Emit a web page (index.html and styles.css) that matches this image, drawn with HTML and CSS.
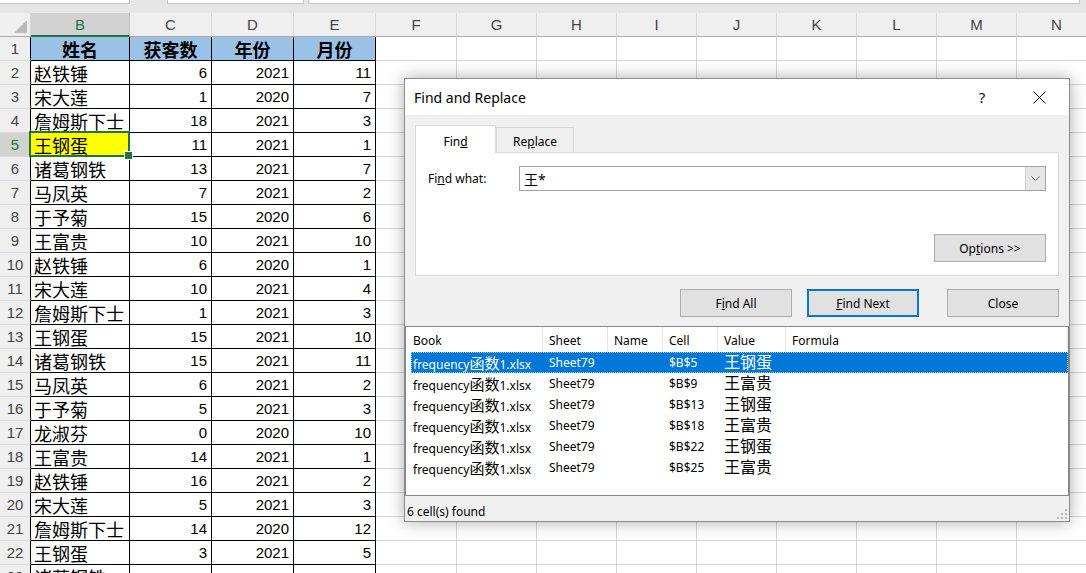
FILE: index.html
```html
<!DOCTYPE html>
<html lang="zh">
<head>
<meta charset="utf-8">
<title>Find and Replace</title>
<link rel="stylesheet" href="styles.css">
</head>
<body>
<div class="app">
  <div class="topstrip"><span class="box b1"></span><span class="box b2"></span><span class="box b3"></span></div>
  <div class="sheet">
    <div class="corner"></div><div class="ch sel">B</div><div class="ch">C</div><div class="ch">D</div><div class="ch">E</div><div class="ch">F</div><div class="ch">G</div><div class="ch">H</div><div class="ch">I</div><div class="ch">J</div><div class="ch">K</div><div class="ch">L</div><div class="ch">M</div><div class="ch">N</div>

    <div class="rh d">1</div><div class="h">姓名</div><div class="h">获客数</div><div class="h">年份</div><div class="h">月份</div><div></div><div></div><div></div><div></div><div></div><div></div><div></div><div></div><div></div>
    <div class="rh d">2</div><div class="t">赵铁锤</div><div class="n">6</div><div class="n">2021</div><div class="n">11</div><div></div><div></div><div></div><div></div><div></div><div></div><div></div><div></div><div></div>
    <div class="rh d">3</div><div class="t">宋大莲</div><div class="n">1</div><div class="n">2020</div><div class="n">7</div><div></div><div></div><div></div><div></div><div></div><div></div><div></div><div></div><div></div>
    <div class="rh d">4</div><div class="t">詹姆斯下士</div><div class="n">18</div><div class="n">2021</div><div class="n">3</div><div></div><div></div><div></div><div></div><div></div><div></div><div></div><div></div><div></div>
    <div class="rh d on">5</div><div class="t cur">王钢蛋</div><div class="n">11</div><div class="n">2021</div><div class="n">1</div><div></div><div></div><div></div><div></div><div></div><div></div><div></div><div></div><div></div>
    <div class="rh d">6</div><div class="t">诸葛钢铁</div><div class="n">13</div><div class="n">2021</div><div class="n">7</div><div></div><div></div><div></div><div></div><div></div><div></div><div></div><div></div><div></div>
    <div class="rh d">7</div><div class="t">马凤英</div><div class="n">7</div><div class="n">2021</div><div class="n">2</div><div></div><div></div><div></div><div></div><div></div><div></div><div></div><div></div><div></div>
    <div class="rh d">8</div><div class="t">于予菊</div><div class="n">15</div><div class="n">2020</div><div class="n">6</div><div></div><div></div><div></div><div></div><div></div><div></div><div></div><div></div><div></div>
    <div class="rh d">9</div><div class="t">王富贵</div><div class="n">10</div><div class="n">2021</div><div class="n">10</div><div></div><div></div><div></div><div></div><div></div><div></div><div></div><div></div><div></div>
    <div class="rh d">10</div><div class="t">赵铁锤</div><div class="n">6</div><div class="n">2020</div><div class="n">1</div><div></div><div></div><div></div><div></div><div></div><div></div><div></div><div></div><div></div>
    <div class="rh d">11</div><div class="t">宋大莲</div><div class="n">10</div><div class="n">2021</div><div class="n">4</div><div></div><div></div><div></div><div></div><div></div><div></div><div></div><div></div><div></div>
    <div class="rh d">12</div><div class="t">詹姆斯下士</div><div class="n">1</div><div class="n">2021</div><div class="n">3</div><div></div><div></div><div></div><div></div><div></div><div></div><div></div><div></div><div></div>
    <div class="rh d">13</div><div class="t">王钢蛋</div><div class="n">15</div><div class="n">2021</div><div class="n">10</div><div></div><div></div><div></div><div></div><div></div><div></div><div></div><div></div><div></div>
    <div class="rh d">14</div><div class="t">诸葛钢铁</div><div class="n">15</div><div class="n">2021</div><div class="n">11</div><div></div><div></div><div></div><div></div><div></div><div></div><div></div><div></div><div></div>
    <div class="rh d">15</div><div class="t">马凤英</div><div class="n">6</div><div class="n">2021</div><div class="n">2</div><div></div><div></div><div></div><div></div><div></div><div></div><div></div><div></div><div></div>
    <div class="rh d">16</div><div class="t">于予菊</div><div class="n">5</div><div class="n">2021</div><div class="n">3</div><div></div><div></div><div></div><div></div><div></div><div></div><div></div><div></div><div></div>
    <div class="rh d">17</div><div class="t">龙淑芬</div><div class="n">0</div><div class="n">2020</div><div class="n">10</div><div></div><div></div><div></div><div></div><div></div><div></div><div></div><div></div><div></div>
    <div class="rh d">18</div><div class="t">王富贵</div><div class="n">14</div><div class="n">2021</div><div class="n">1</div><div></div><div></div><div></div><div></div><div></div><div></div><div></div><div></div><div></div>
    <div class="rh d">19</div><div class="t">赵铁锤</div><div class="n">16</div><div class="n">2021</div><div class="n">2</div><div></div><div></div><div></div><div></div><div></div><div></div><div></div><div></div><div></div>
    <div class="rh d">20</div><div class="t">宋大莲</div><div class="n">5</div><div class="n">2021</div><div class="n">3</div><div></div><div></div><div></div><div></div><div></div><div></div><div></div><div></div><div></div>
    <div class="rh d">21</div><div class="t">詹姆斯下士</div><div class="n">14</div><div class="n">2020</div><div class="n">12</div><div></div><div></div><div></div><div></div><div></div><div></div><div></div><div></div><div></div>
    <div class="rh d">22</div><div class="t">王钢蛋</div><div class="n">3</div><div class="n">2021</div><div class="n">5</div><div></div><div></div><div></div><div></div><div></div><div></div><div></div><div></div><div></div>
    <div class="rh d">23</div><div class="t">诸葛钢铁</div><div class="n"></div><div class="n"></div><div class="n"></div><div></div><div></div><div></div><div></div><div></div><div></div><div></div><div></div><div></div>
  </div>
</div>

<div class="dialog">
  <div class="titlebar">
    <span class="title">Find and Replace</span>
    <span class="help">?</span>
    <span class="close"><svg width="13" height="13" viewBox="0 0 13 13"><path d="M0.5 0.5L12.5 12.5M12.5 0.5L0.5 12.5" stroke="#000" stroke-width="1" fill="none"/></svg></span>
  </div>
  <div class="dbody">
    <div class="tabs">
      <div class="tab active">Fin<u>d</u></div>
      <div class="tab">Re<u>p</u>lace</div>
    </div>
    <div class="panel">
      <div class="findrow">
        <span class="lbl">Fi<u>n</u>d what:</span>
        <div class="combo"><span class="val">王*</span><span class="drop"><svg width="9" height="5" viewBox="0 0 9 5"><path d="M0.5 0.5L4.5 4.5L8.5 0.5" fill="none" stroke="#606060"/></svg></span></div>
      </div>
      <div class="optrow"><button class="btn">Op<u>t</u>ions &gt;&gt;</button></div>
    </div>
    <div class="btnrow">
      <button class="btn findall">F<u>i</u>nd All</button>
      <button class="btn primary findnext"><u>F</u>ind Next</button>
      <button class="btn">Close</button>
    </div>
  </div>
  <div class="results">
    <div class="rhead"><span class="c1">Book</span><span>Sheet</span><span>Name</span><span>Cell</span><span>Value</span><span>Formula</span></div>
    <div class="rrow selected"><span class="c1">frequency<span class="cj">函数</span>1.xlsx</span><span>Sheet79</span><span></span><span>$B$5</span><span class="v">王钢蛋</span><span></span></div>
    <div class="rrow"><span class="c1">frequency<span class="cj">函数</span>1.xlsx</span><span>Sheet79</span><span></span><span>$B$9</span><span class="v">王富贵</span><span></span></div>
    <div class="rrow"><span class="c1">frequency<span class="cj">函数</span>1.xlsx</span><span>Sheet79</span><span></span><span>$B$13</span><span class="v">王钢蛋</span><span></span></div>
    <div class="rrow"><span class="c1">frequency<span class="cj">函数</span>1.xlsx</span><span>Sheet79</span><span></span><span>$B$18</span><span class="v">王富贵</span><span></span></div>
    <div class="rrow"><span class="c1">frequency<span class="cj">函数</span>1.xlsx</span><span>Sheet79</span><span></span><span>$B$22</span><span class="v">王钢蛋</span><span></span></div>
    <div class="rrow"><span class="c1">frequency<span class="cj">函数</span>1.xlsx</span><span>Sheet79</span><span></span><span>$B$25</span><span class="v">王富贵</span><span></span></div>
  </div>
  <div class="status">
    <span class="found">6 cell(s) found</span>
    <svg class="grip" width="12" height="12" viewBox="0 0 12 12"><g fill="#b8b8b8"><rect x="9" y="1" width="2" height="2"/><rect x="5" y="5" width="2" height="2"/><rect x="9" y="5" width="2" height="2"/><rect x="1" y="9" width="2" height="2"/><rect x="5" y="9" width="2" height="2"/><rect x="9" y="9" width="2" height="2"/></g></svg>
  </div>
</div>
</body>
</html>
```

FILE: styles.css
```css
* { box-sizing: border-box; }
html, body { margin: 0; padding: 0; }
body {
  width: 1086px;
  height: 573px;
  overflow: hidden;
  background: #fff;
  position: relative;
  font-family: "Liberation Sans", "Noto Sans CJK SC", sans-serif;
}

/* top strip (formula bar bottom) */
.topstrip { height: 13px; background: #e6e6e6; display: flex; align-items: flex-start; }
.box { height: 4px; background: #fff; border: 1px solid #c6c6c6; border-top: none; }
.b1 { width: 131px; margin-left: -1px; }
.b2 { width: 137px; margin-left: 37px; }
.b3 { flex: 1; margin-left: 4px; margin-right: 6px; }

/* sheet grid */
.sheet {
  display: grid;
  grid-template-columns: 31px 99px 82px 82px 82px 81px repeat(8, 80px);
  grid-auto-rows: 24px;
}
.sheet > div {
  border-right: 1px solid #d4d4d4;
  border-bottom: 1px solid #d4d4d4;
  white-space: nowrap;
  overflow: hidden;
  display: flex;
  align-items: center;
  color: #000;
}
.sheet > .corner { background: #efefef; position: relative; border-bottom-color: #ababab; border-right-color: #d4d4d4; }
.sheet > .corner::after {
  content: "";
  position: absolute;
  right: 3px;
  bottom: 3px;
  width: 0;
  height: 0;
  border-left: 13px solid transparent;
  border-bottom: 13px solid #b9b9b9;
}
.sheet > .ch {
  background: #efefef;
  justify-content: center;
  color: #444;
  font-size: 15px;
  border-bottom-color: #ababab;
  border-right-color: #dadada;
}
.sheet > .ch.sel {
  background: #d2d2d2;
  color: #217346;
  border-bottom: 2px solid #217346;
  border-right-color: #c2c2c2;
}
.sheet > .rh {
  background: #efefef;
  justify-content: center;
  color: #444;
  font-size: 15px;
  border-right-color: #ababab;
  border-bottom-color: #dadada;
}
.sheet > .rh.d { border-right-color: #000; }
.sheet > .rh.on { background: #d2d2d2; color: #217346; }

.sheet > .h {
  background: #9bc2e6;
  justify-content: center;
  font-weight: bold;
  font-size: 18px;
  border-color: #000;
}
.sheet > .t { font-size: 18px; padding-left: 3px; border-color: #000; }
.sheet > .n { justify-content: flex-end; padding-right: 4px; font-size: 15px; border-color: #000; }

.sheet > .cur { background: #ffff00; position: relative; overflow: visible; z-index: 2; }
.sheet > .cur::after {
  content: "";
  position: absolute;
  left: -2px; top: -2px; right: -1px; bottom: -1px;
  border: 2px solid #217346;
}
.sheet > .cur::before {
  content: "";
  position: absolute;
  right: -4px; bottom: -4px;
  width: 7px; height: 7px;
  background: #217346;
  border: 1px solid #fff;
  z-index: 1;
}

/* dialog */
.dialog {
  position: absolute;
  left: 404px;
  top: 78px;
  width: 666px;
  height: 444px;
  border: 1px solid #8c8c8c;
  background: #f0f0f0;
  box-shadow: 0 0 16px rgba(0, 0, 0, 0.33);
  display: flex;
  flex-direction: column;
  font-family: "Noto Sans", "Noto Sans CJK SC", sans-serif;
  font-size: 12px;
  color: #000;
}
.titlebar {
  flex: none;
  height: 36px;
  background: #fff;
  display: flex;
  align-items: center;
  padding-left: 9px;
}
.title { flex: 1; font-size: 14px; }
.help { width: 20px; text-align: center; font-size: 15px; color: #111; margin-left: 2px; }
.close { width: 13px; height: 13px; margin-left: 41px; margin-right: 23px; display: flex; }

.dbody { flex: none; height: 211px; padding: 10px 10px 0; }
.tabs { display: flex; align-items: flex-end; height: 27px; }
.tab {
  height: 25px;
  border: 1px solid #d9d9d9;
  border-bottom: none;
  display: flex;
  align-items: center;
  justify-content: center;
  background: #f0f0f0;
  width: 78px;
  padding-top: 2px;
}
.tab.active {
  width: 81px;
  height: 28px;
  background: #fff;
  position: relative;
  z-index: 1;
  margin-bottom: -1px;
  padding-top: 3px;
}
.panel {
  height: 124px;
  background: #fff;
  border: 1px solid #d9d9d9;
  padding: 13px 12px 0;
  display: flex;
  flex-direction: column;
}
.findrow { display: flex; align-items: center; height: 25px; }
.lbl { width: 91px; }
.combo { flex: 1; height: 25px; border: 1px solid #a3a3a3; display: flex; background: #fff; }
.val { flex: 1; padding-left: 4px; font-size: 14px; display: flex; align-items: center; }
.drop { width: 20px; background: #e6e6e6; border-left: 1px solid #cfcfcf; display: flex; align-items: center; justify-content: center; }

.optrow { display: flex; justify-content: flex-end; margin-top: 43px; }
.btn {
  font: inherit;
  font-size: 12px;
  color: #000;
  width: 112px;
  height: 28px;
  padding: 0;
  background: #e1e1e1;
  border: 1px solid #adadad;
}
.btn.primary { border: 2px solid #0078d7; }
.btnrow { display: flex; justify-content: flex-end; margin-top: 13px; }
.findall { margin-right: 15px; }
.findnext { margin-right: 28px; }

.results {
  flex: none;
  height: 170px;
  background: #fff;
  border: 1px solid #828790;
  overflow: hidden;
}
.rhead {
  display: grid;
  grid-template-columns: 137px 65px 55px 55px 68px 1fr;
  height: 25px;
}
.rhead span {
  border-right: 1px solid #e5e5e5;
  padding-left: 6px;
  padding-top: 1px;
  display: flex;
  align-items: center;
}
.rhead .c1 { padding-left: 7px; }
.rrow {
  display: grid;
  grid-template-columns: 132px 65px 55px 55px 68px 1fr;
  height: 21px;
  margin-left: 5px;
  align-items: center;
}
.rrow > span { padding-left: 6px; white-space: nowrap; overflow: hidden; }
.rrow > .c1 { padding-left: 2px; }
.rrow .cj { font-size: 15px; }
.rrow .v { font-size: 16px; line-height: 21px; }
.rrow.selected {
  background: #0078d7;
  color: #fff;
  outline: 1px dotted #9ccaf0;
  outline-offset: -1px;
}

.status { flex: 1; display: flex; align-items: center; padding-left: 2px; }
.found { padding-top: 5px; }
.grip { margin-left: auto; align-self: flex-end; margin-right: 1px; margin-bottom: 1px; }
```
